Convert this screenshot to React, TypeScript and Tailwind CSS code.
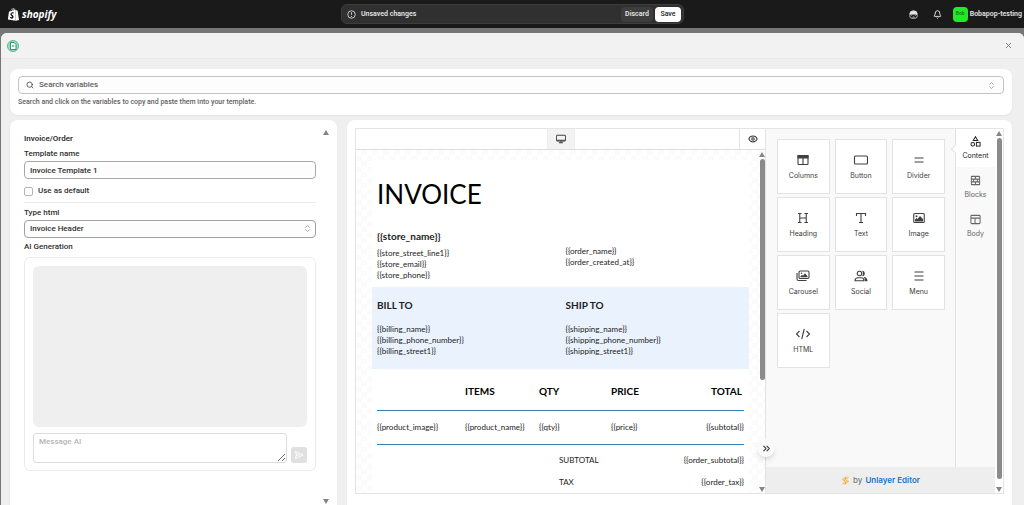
import type { ReactNode } from 'react';
import { Bell, ChevronsRight, ChevronsUpDown, Eye, Search, X } from 'lucide-react';
import { FaShopify } from 'react-icons/fa';

function Stroke({ children, className = 'size-3' }: { children: ReactNode; className?: string }) {
  return (
    <svg
      viewBox="0 0 24 24"
      fill="none"
      stroke="currentColor"
      strokeWidth="2.2"
      className={className}
      aria-hidden="true"
    >
      {children}
    </svg>
  );
}

const tools: { label: string; icon: ReactNode }[] = [
  {
    label: 'Columns',
    icon: (
      <>
        <rect x="2" y="3" width="20" height="18" rx="1.5" />
        <path d="M2 3h20v5H2z" fill="currentColor" />
        <path d="M12 8v13" />
      </>
    ),
  },
  { label: 'Button', icon: <rect x="-1" y="4" width="26" height="16" rx="2" /> },
  { label: 'Divider', icon: <path d="M3 8h18M3 16h18" /> },
  {
    label: 'Heading',
    icon: <path d="M2 3h7M15 3h7M2 21h7M15 21h7M5.500 3v18M18.500 3v18M5.500 12h13" />,
  },
  { label: 'Text', icon: <path d="M3 8V3h18v5M12 3v18M8 21h8" /> },
  {
    label: 'Image',
    icon: (
      <>
        <rect x="1.500" y="3" width="21" height="18" rx="2" />
        <circle cx="7" cy="8.500" r="2" fill="currentColor" stroke="none" />
        <path d="M4 19v-4l3-3 2 2 5-6 6 6v5z" fill="currentColor" stroke="none" />
      </>
    ),
  },
  {
    label: 'Carousel',
    icon: (
      <>
        <rect x="4" y="2" width="20" height="15" rx="2.500" />
        <path d="M0 6v12a3 3 0 0 0 3 3h16" />
        <circle cx="9" cy="6.500" r="1.500" fill="currentColor" stroke="none" />
        <path d="M7 14.500v-2l3-3 2 2 4-5 5 6v2z" fill="currentColor" stroke="none" />
      </>
    ),
  },
  {
    label: 'Social',
    icon: (
      <>
        <circle cx="9" cy="7" r="4.500" />
        <path d="M0 21.500c0-4 2.500-6 6-6h6c3.500 0 6 2 6 6z" />
        <path
          d="M14 1.500a5.500 5.500 0 1 1 0 11c2.500-3 2.500-8 0-11zM17 14c5 0 8 3 8 8.500h-5c0-4-1-6.500-3-8.500z"
          fill="currentColor"
          stroke="none"
        />
      </>
    ),
  },
  { label: 'Menu', icon: <path d="M3 4h18M3 12h18M3 20h18" /> },
  { label: 'HTML', icon: <path d="M5 6l-6 6 6 6M19 6l6 6-6 6M14.500 2l-5 20" /> },
];

const tabs: { label: string; icon: ReactNode }[] = [
  {
    label: 'Content',
    icon: (
      <>
        <path d="M12 1.500l5 8.500H7z" />
        <circle cx="6" cy="18" r="4" />
        <rect x="14" y="14" width="8" height="8" />
      </>
    ),
  },
  {
    label: 'Blocks',
    icon: (
      <>
        <rect x="3" y="3" width="18" height="18" rx="1" />
        <path d="M3 9h18M3 15h18M12 3v6M8 9v6M16 9v6M12 15v6" />
      </>
    ),
  },
  {
    label: 'Body',
    icon: (
      <>
        <rect x="2" y="3" width="20" height="18" rx="2" />
        <path d="M2 9h20M11 9v12" />
      </>
    ),
  },
];

function Arrow({ down = false }: { down?: boolean }) {
  return (
    <svg viewBox="0 0 6 5" className="h-[5px] w-[6px] shrink-0 fill-[#858585]" aria-hidden="true">
      <path d={down ? 'M0 0h6L3 5z' : 'M0 5h6L3 0z'} />
    </svg>
  );
}

function Header() {
  return (
    <header className="grid h-7 shrink-0 grid-cols-[1fr_344px_1fr] items-center bg-[#1a1a1a] text-[7px] font-semibold text-[#e3e3e3]">
      <a href="#home" className="flex items-center gap-[2px] pl-[7px] text-white">
        <FaShopify className="size-[13px]" />
        <span className="font-['Open_Sans',sans-serif] text-[10px] leading-3 font-bold italic">shopify</span>
      </a>
      <div className="ml-px flex h-5 items-center rounded-md border border-[#3d3d3d] bg-[#303030] px-[2px]">
        <Stroke className="ml-[3px] size-[9px]">
          <circle cx="12" cy="12" r="10" />
          <path d="M12 6v7M12 16v3" />
        </Stroke>
        <span className="ml-[5px] flex-1">Unsaved changes</span>
        <button className="h-[15px] w-8 rounded bg-[#3d3d3d]">Discard</button>
        <button className="ml-[2px] h-[15px] w-[26px] rounded bg-white text-[#303030]">Save</button>
      </div>
      <div className="flex items-center justify-end pr-[2px]">
        <button aria-label="Assistant">
          <svg viewBox="0 0 24 24" className="size-[9px]" fill="none" stroke="currentColor" strokeWidth="2">
            <path d="M2 11a10 9 0 0 1 20 0z" fill="currentColor" />
            <rect x="2" y="9" width="20" height="13" rx="6" />
            <path d="M7 14v2M17 14v2M9 19h6" />
          </svg>
        </button>
        <button className="ml-[15px]" aria-label="Notifications">
          <Bell className="size-[9px]" strokeWidth={2.5} />
        </button>
        <button className="ml-[11px] flex items-center gap-[2px]">
          <span className="flex size-[15px] items-center justify-center rounded bg-[#25e82b] text-[5px] text-[#12801a]">
            Bob
          </span>
          Bobapop-testing
        </button>
      </div>
    </header>
  );
}

function VariableSearch() {
  return (
    <section className="shrink-0 rounded-lg bg-white px-2 py-[7px] shadow-xs">
      <label className="flex h-[18px] items-center rounded border border-[#c4c4c4] bg-[#fdfdfd] px-[7px]">
        <Search className="size-2 text-[#4a4a4a]" strokeWidth={2.5} />
        <input
          type="text"
          aria-label="Search variables"
          placeholder="Search variables"
          className="ml-[5px] min-w-0 flex-1 outline-none placeholder:text-[#616161]"
        />
        <ChevronsUpDown className="size-[9px] text-[#8a8a8a]" />
      </label>
      <p className="mt-[3px] text-[7px] leading-[11px] text-[#616161]">
        Search and click on the variables to copy and paste them into your template.
      </p>
    </section>
  );
}

function TemplateForm() {
  return (
    <section className="flex w-[327px] shrink-0 rounded-t-lg bg-white pr-2 pl-[14px] shadow-xs">
      <form className="flex min-w-0 flex-1 flex-col pt-[13px] leading-3">
        <h2 className="text-[8px] font-semibold">Invoice/Order</h2>
        <label htmlFor="name" className="mt-[3px]">
          Template name
        </label>
        <input
          id="name"
          defaultValue="Invoice Template 1"
          className="mt-px h-[18px] rounded border border-[#a8a8a8] bg-[#fdfdfd] px-[5px]"
        />
        <label className="mt-[6px] flex items-center gap-[5px]">
          <input type="checkbox" className="size-[9px] appearance-none rounded-[2px] border border-[#b5b5b5]" />
          Use as default
        </label>
        <hr className="mt-[5px] border-[#ebebeb]" />
        <label htmlFor="type" className="mt-1">
          Type html
        </label>
        <div className="relative mt-px">
          <select
            id="type"
            className="block h-[18px] w-full appearance-none rounded border border-[#a0a0a0] bg-[#fdfdfd] px-[5px]"
          >
            <option>Invoice Header</option>
          </select>
          <ChevronsUpDown className="pointer-events-none absolute top-1 right-1 size-[9px] text-[#8a8a8a]" />
        </div>
        <h3 className="mt-[3px]">AI Generation</h3>
        <div className="mt-1 rounded-md border border-[#ebebeb] p-2 pb-[7px]">
          <div className="h-[161px] rounded-md bg-[#efefef]" />
          <div className="mt-[6px] flex items-end gap-1">
            <textarea
              aria-label="Message AI"
              placeholder="Message AI"
              className="h-[30px] min-w-0 flex-1 rounded-[3px] border border-[#dcdcdc] px-[5px] py-[2px] placeholder:text-[#b5b5b5]"
            />
            <button
              type="button"
              aria-label="Send"
              className="flex size-4 items-center justify-center rounded-[3px] bg-[#e0e0e0] text-white"
            >
              <Stroke className="size-[10px]">
                <path d="M3 3l19 9-19 9 3-9zM6 12h8" />
              </Stroke>
            </button>
          </div>
        </div>
      </form>
      <div className="ml-[7px] flex flex-col justify-between pt-[10px] pb-[1px]">
        <Arrow />
        <Arrow down />
      </div>
    </section>
  );
}

function Invoice() {
  return (
    <article className="mx-auto min-h-full max-w-[377px] bg-white font-['Lato',sans-serif] text-[8px] leading-[11px] font-normal text-[#222222]">
      <h1 className="px-[5px] pt-[18px] text-[26px] leading-8 text-black">INVOICE</h1>
      <div className="mt-5 grid grid-cols-2 px-[5px] pb-[6px]">
        <div>
          <h2 className="text-[10px] leading-3 font-bold">{'{{store_name}}'}</h2>
          <p className="mt-[6px]">{'{{store_street_line1}}'}</p>
          <p>{'{{store_email}}'}</p>
          <p>{'{{store_phone}}'}</p>
        </div>
        <div className="pt-4 pl-[5px]">
          <p>{'{{order_name}}'}</p>
          <p>{'{{order_created_at}}'}</p>
        </div>
      </div>
      <div className="grid grid-cols-2 bg-[#eaf2fe] px-[5px] pt-[11px] pb-3">
        <div>
          <h2 className="mb-3 text-[10px] leading-[14px] font-bold">BILL TO</h2>
          <p>{'{{billing_name}}'}</p>
          <p>{'{{billing_phone_number}}'}</p>
          <p>{'{{billing_street1}}'}</p>
        </div>
        <div className="pl-[5px]">
          <h2 className="mb-3 text-[10px] leading-[14px] font-bold">SHIP TO</h2>
          <p>{'{{shipping_name}}'}</p>
          <p>{'{{shipping_phone_number}}'}</p>
          <p>{'{{shipping_street1}}'}</p>
        </div>
      </div>
      <div className="px-[5px]">
        <table className="w-full table-fixed text-left">
          <thead className="border-b border-[#3b7fb0] text-[10px] text-black">
            <tr className="h-[41px]">
              <th className="w-[88px] pt-1" />
              <th className="w-[74px] pt-1">ITEMS</th>
              <th className="w-[72px] pt-1">QTY</th>
              <th className="pt-1">PRICE</th>
              <th className="pt-1 pr-[2px] text-right">TOTAL</th>
            </tr>
          </thead>
          <tbody className="border-b border-[#3b7fb0]">
            <tr className="h-[34px]">
              <td>{'{{product_image}}'}</td>
              <td>{'{{product_name}}'}</td>
              <td>{'{{qty}}'}</td>
              <td>{'{{price}}'}</td>
              <td className="text-right">{'{{subtotal}}'}</td>
            </tr>
          </tbody>
        </table>
        <dl className="ml-[182px] grid grid-cols-2 pt-1 leading-[22px]">
          <dt>SUBTOTAL</dt>
          <dd className="text-right">{'{{order_subtotal}}'}</dd>
          <dt>TAX</dt>
          <dd className="text-right">{'{{order_tax}}'}</dd>
        </dl>
      </div>
    </article>
  );
}

function Canvas() {
  return (
    <div className="flex min-w-0 flex-1 flex-col">
      <div className="grid h-[21px] shrink-0 grid-cols-[1fr_28px_1fr] border-b border-[#dedede]">
        <button
          aria-label="Desktop"
          className="col-start-2 flex items-center justify-center border-x border-[#ececec] bg-[#f3f3f3] text-[#333333]"
        >
          <Stroke className="size-[10px]">
            <rect x="1" y="3" width="22" height="14" rx="1.5" />
            <path d="M2 15h20M12 17v4M7 21h10" />
          </Stroke>
        </button>
        <button
          aria-label="Preview"
          className="flex w-[26px] items-center justify-center justify-self-end border-l border-[#e4e4e4] text-[#333333]"
        >
          <Eye className="size-[10px]" strokeWidth={2.5} />
        </button>
      </div>
      <div className="relative min-h-0 flex-1 overflow-hidden bg-[conic-gradient(#fbfbfb_25%,#ffffff_0_50%,#fbfbfb_0_75%,#ffffff_0)] bg-[length:11px_11px] pt-[10px]">
        <Invoice />
        <div className="absolute inset-y-0 right-0 flex w-[6px] flex-col items-center pt-[2px] pb-[1px]">
          <Arrow />
          <div className="mt-[2px] h-[65%] w-[5px] rounded-full bg-[#8b8b8b]" />
          <div className="flex-1" />
          <Arrow down />
        </div>
      </div>
    </div>
  );
}

function ToolPanel() {
  return (
    <aside className="relative flex w-[238px] shrink-0 border-l border-[#e2e2e2] font-['Inter',sans-serif] font-normal">
      <div className="flex min-w-0 flex-1 flex-col bg-[#f9f9f9]">
        <div className="flex min-h-0 flex-1">
          <div className="grid flex-1 auto-rows-[55px] grid-cols-3 gap-x-[5px] gap-y-[3px] pt-[10px] pr-[10px] pl-[11px]">
            {tools.map(({ label, icon }) => (
              <button
                key={label}
                className="flex flex-col items-center justify-center gap-[5px] border border-[#e3e3e3] bg-white text-[7px] leading-[9px] text-[#404040]"
              >
                <Stroke className="size-3 overflow-visible">{icon}</Stroke>
                {label}
              </button>
            ))}
          </div>
          <nav className="relative w-10 border-l border-[#e2e2e2]">
            <span className="absolute top-[17px] -left-[4px] size-[6px] rotate-45 border-b border-l border-[#e2e2e2] bg-white" />
            {tabs.map(({ label, icon }, i) => (
              <button
                key={label}
                className={
                  i === 0
                    ? 'relative flex h-[38px] w-full flex-col items-center justify-center gap-1 bg-white text-[7px] leading-[9px] text-[#262626]'
                    : 'flex h-[39px] w-full flex-col items-center justify-center gap-1 text-[7px] leading-[9px] text-[#666666]'
                }
              >
                <Stroke className="size-[11px]">{icon}</Stroke>
                {label}
              </button>
            ))}
          </nav>
        </div>
        <footer className="flex h-[26px] shrink-0 items-center justify-center gap-[3px] bg-[#eeeeee] font-medium text-[#7a7a7a]">
          <svg viewBox="0 0 24 24" className="size-[9px]" fill="none" stroke="#f5a623" strokeWidth="2.4">
            <path d="M14 2L4 10l6 2zM10 22l10-8-6-2zM20 2l-7 8M4 22l7-8" />
          </svg>
          by
          <a href="#unlayer" className="font-semibold text-[#1773c7]">
            Unlayer Editor
          </a>
        </footer>
      </div>
      <div className="flex w-[8px] flex-col items-center bg-white pt-[2px] pb-[1px]">
        <Arrow />
        <div className="mt-[2px] mb-2 w-[5px] flex-1 rounded-full bg-[#8b8b8b]" />
        <Arrow down />
      </div>
      <button
        aria-label="Collapse panel"
        className="absolute bottom-[36px] -left-[9px] flex size-[18px] items-center justify-center rounded-full bg-[#fafafa] text-[#444444] shadow-md"
      >
        <ChevronsRight className="size-[11px]" strokeWidth={2.5} />
      </button>
    </aside>
  );
}

export default function App() {
  return (
    <div className="flex h-screen flex-col overflow-hidden bg-[#777777] font-['Roboto',sans-serif] text-[8px] font-medium text-[#303030]">
      <Header />
      <div className="mt-[5px] ml-px flex min-h-0 flex-1 flex-col rounded-t-md bg-[#efefef]">
        <div className="flex h-[26px] shrink-0 items-center justify-between rounded-t-md border-b border-[#e8e8e8] bg-[#f2f2f2] pr-[11px] pl-[6px]">
          <svg viewBox="0 0 24 24" className="size-3" aria-hidden="true">
            <circle cx="12" cy="12" r="11" fill="#8be8bd" stroke="#4a9c78" strokeWidth="1.5" />
            <path d="M7 5h7l4 4v10H7z" fill="#ffffff" stroke="#37815f" strokeWidth="1.8" />
            <path d="M10 12h5" stroke="#37815f" strokeWidth="2" />
          </svg>
          <button aria-label="Close">
            <X className="size-[9px] text-[#7a7a7a]" strokeWidth={2.5} />
          </button>
        </div>
        <main className="flex min-h-0 flex-1 flex-col gap-[5px] pt-[10px] pr-3 pl-[9px]">
          <VariableSearch />
          <div className="flex min-h-0 flex-1 gap-[10px]">
            <TemplateForm />
            <section className="flex min-w-0 flex-1 rounded-t-lg bg-white px-2 pt-2 pb-[11px] shadow-xs">
              <div className="flex min-w-0 flex-1 border border-[#e4e4e4]">
                <Canvas />
                <ToolPanel />
              </div>
            </section>
          </div>
        </main>
      </div>
    </div>
  );
}
